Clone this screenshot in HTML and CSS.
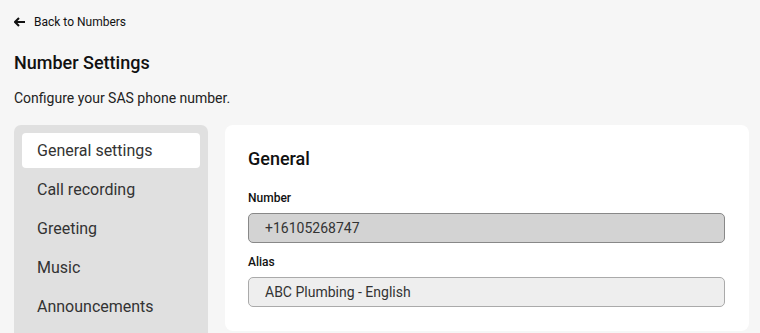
FILE: index.html
```html
<!DOCTYPE html>
<html>
<head>
  <meta charset="UTF-8">
  <title>Number Settings</title>
  <link rel="stylesheet" href="styles.css">
</head>
<body>

  <a href="#" class="back">
    <svg class="back__icon" width="12" height="10" viewBox="0 0 12 10">
      <path d="M5 1 L1 5 L5 9 M1 5 H11" fill="none" stroke="#111" stroke-width="2"/>
    </svg>
    Back to Numbers
  </a>

  <h1 class="title">Number Settings</h1>
  <p class="subtitle">Configure your SAS phone number.</p>

  <div class="layout">
    <nav class="menu">
      <a href="#" class="menu__item menu__item--active">General settings</a>
      <a href="#" class="menu__item">Call recording</a>
      <a href="#" class="menu__item">Greeting</a>
      <a href="#" class="menu__item">Music</a>
      <a href="#" class="menu__item">Announcements</a>
    </nav>

    <div class="card">
      <h2 class="card__title">General</h2>

      <label class="field__label">Number</label>
      <input class="field__input field__input--disabled" value="+16105268747" readonly>

      <label class="field__label field__label--next">Alias</label>
      <input class="field__input" value="ABC Plumbing - English">
    </div>
  </div>

</body>
</html>
```

FILE: styles.css
```css
html {
  overflow: hidden;
}

body {
  margin: 0;
  padding: 14px 11px 0 14px;
  background: #f6f6f6;
  font-family: Roboto, "Noto Sans", sans-serif;
  color: #222;
  box-sizing: border-box;
  height: 333px;
  overflow: hidden;
}

.back {
  display: flex;
  align-items: center;
  height: 16px;
  font-size: 12px;
  color: #111;
  text-decoration: none;
}

.back__icon {
  margin-right: 8px;
}

.title {
  margin: 22px 0 0;
  font-size: 18px;
  line-height: 22px;
  font-weight: 500;
  color: #111;
}

.subtitle {
  margin: 16px 0 0;
  font-size: 14px;
  line-height: 16px;
  color: #222;
}

.layout {
  display: flex;
  gap: 17px;
  margin-top: 19px;
  align-items: flex-start;
}

.menu {
  width: 194px;
  flex-shrink: 0;
  height: 260px;
  background: #e0e0e0;
  border-radius: 7px;
  padding: 8px;
  box-sizing: border-box;
  display: flex;
  flex-direction: column;
  gap: 4px;
}

.menu__item {
  display: block;
  height: 35px;
  line-height: 35px;
  padding-left: 15px;
  font-size: 16px;
  color: #333;
  text-decoration: none;
  border-radius: 4px;
}

.menu__item--active {
  background: #fff;
}

.card {
  flex: 1;
  background: #fff;
  border-radius: 8px;
  padding: 23px 24px 24px 23px;
  display: flex;
  flex-direction: column;
}

.card__title {
  margin: 0;
  font-size: 18px;
  line-height: 22px;
  font-weight: 500;
  color: #111;
}

.field__label {
  margin-top: 20px;
  font-size: 12px;
  line-height: 16px;
  font-weight: 500;
  color: #111;
}

.field__label--next {
  margin-top: 11px;
}

.field__input {
  margin-top: 7px;
  height: 30px;
  box-sizing: border-box;
  border: 1px solid #aaa;
  border-radius: 5px;
  background: #eee;
  padding: 0 16px;
  font-family: inherit;
  font-size: 14px;
  color: #333;
  outline: none;
}

.field__input--disabled {
  background: #d3d3d3;
  border-color: #888;
}
```
